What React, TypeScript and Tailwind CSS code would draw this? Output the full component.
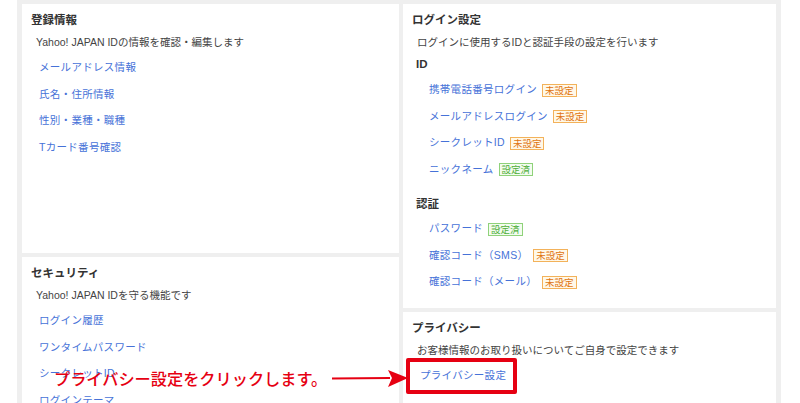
const font = { fontFamily: '"Liberation Sans", Arial, "Noto Sans CJK JP", sans-serif' }

function Badge({ done }: { done?: boolean }) {
  return done ? (
    <span className="ml-[5px] inline-flex h-[13px] items-center border border-[#8fd27a] bg-[#f3fcef] px-[2px] text-[9.5px] leading-none text-[#4fae3a]">
      設定済
    </span>
  ) : (
    <span className="ml-[5px] inline-flex h-[13px] items-center border border-[#f3b25a] bg-[#fff8e8] px-[2px] text-[9.5px] leading-none text-[#e0740f]">
      未設定
    </span>
  )
}

function Title({ children }: { children: React.ReactNode }) {
  return <h2 className="pl-[9px] pt-[9px] text-[11.5px] font-bold leading-[14px] text-[#333]">{children}</h2>
}

function Desc({ children }: { children: React.ReactNode }) {
  return <p className="mt-[8px] pl-[14px] text-[10.5px] leading-[14px] text-[#444]">{children}</p>
}

function LinkRow({ label, badge }: { label: string; badge?: "done" | "todo" }) {
  return (
    <div className="flex h-[26.5px] items-center">
      <a className="text-[10.5px] tracking-[0.3px] text-[#4672d8]">{label}</a>
      {badge && <Badge done={badge === "done"} />}
    </div>
  )
}

export default function App() {
  return (
    <div className="relative h-[403px] w-[800px] overflow-hidden bg-white" style={font}>
      <div className="ml-[17px] flex h-full w-[764px] gap-[4px] bg-[#efefef] px-[5px] pt-[4px]">
        {/* left column */}
        <div className="flex w-[377px] flex-col gap-[4px]">
          <section className="h-[249px] shrink-0 bg-white">
            <Title>登録情報</Title>
            <Desc>Yahoo! JAPAN IDの情報を確認・編集します</Desc>
            <div className="mt-[6px] pl-[17px]">
              <LinkRow label="メールアドレス情報" />
              <LinkRow label="氏名・住所情報" />
              <LinkRow label="性別・業種・職種" />
              <LinkRow label="Tカード番号確認" />
            </div>
          </section>
          <section className="min-h-0 flex-1 overflow-hidden bg-white">
            <Title>セキュリティ</Title>
            <Desc>Yahoo! JAPAN IDを守る機能です</Desc>
            <div className="mt-[6px] pl-[17px]">
              <LinkRow label="ログイン履歴" />
              <LinkRow label="ワンタイムパスワード" />
              <LinkRow label="シークレットID" />
              <LinkRow label="ログインテーマ" />
            </div>
          </section>
        </div>

        {/* right column */}
        <div className="flex w-[373px] flex-col gap-[4px]">
          <section className="h-[304px] shrink-0 bg-white">
            <Title>ログイン設定</Title>
            <Desc>ログインに使用するIDと認証手段の設定を行います</Desc>
            <h3 className="mt-[8px] pl-[13px] text-[11.5px] font-bold leading-[14px] text-[#333]">ID</h3>
            <div className="mt-[6px] pl-[26px]">
              <LinkRow label="携帯電話番号ログイン" badge="todo" />
              <LinkRow label="メールアドレスログイン" badge="todo" />
              <LinkRow label="シークレットID" badge="todo" />
              <LinkRow label="ニックネーム" badge="done" />
            </div>
            <h3 className="mt-[14px] pl-[13px] text-[11.5px] font-bold leading-[14px] text-[#333]">認証</h3>
            <div className="mt-[5px] pl-[26px]">
              <LinkRow label="パスワード" badge="done" />
              <LinkRow label="確認コード（SMS）" badge="todo" />
              <LinkRow label="確認コード（メール）" badge="todo" />
            </div>
          </section>
          <section className="relative min-h-0 flex-1 bg-white">
            <Title>プライバシー</Title>
            <Desc>お客様情報のお取り扱いについてご自身で設定できます</Desc>
            <div className="mt-[6px] pl-[17px]">
              <LinkRow label="プライバシー設定" />
            </div>
            {/* highlight */}
            <div className="absolute left-[3px] top-[46px] h-[36px] w-[111px] rounded-[2px] border-[4px] border-[#e60012]" />
          </section>
        </div>
      </div>

      {/* annotation */}
      <div className="absolute left-[54px] top-[368px] flex items-center">
        <span className="text-[16.2px] font-medium leading-[20px] text-[#e60012]" style={{ fontFamily: '"Noto Sans CJK JP", sans-serif' }}>
          プライバシー設定をクリックします。
        </span>
        <svg width="80" height="20" viewBox="0 0 80 20" className="ml-[3px]">
          <path d="M2 9.5 L60 9 L60 11 L2 11.5 Z" fill="#e60012" />
          <path d="M58 2 L78 10 L58 19 L62 10 Z" fill="#e60012" />
        </svg>
      </div>
    </div>
  )
}
